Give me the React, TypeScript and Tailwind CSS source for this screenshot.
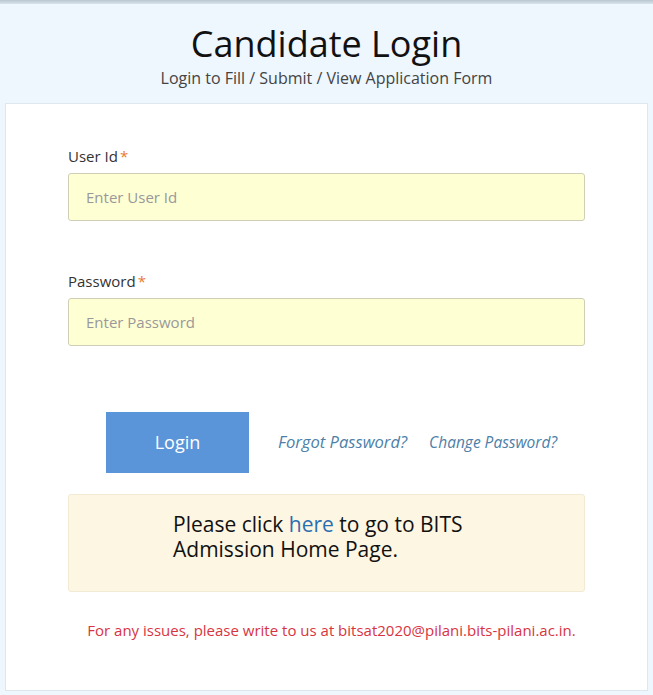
import React from "react";

export default function App() {
  const font = { fontFamily: '"Open Sans", "Noto Sans", sans-serif' };
  return (
    <div className="min-h-[695px] w-full bg-[#eef6fe]" style={font}>
      <div className="h-[4px] bg-gradient-to-b from-[#b9c7d1] to-[#d9e4ec]" />
      <div className="flex flex-col items-center pt-[18px] pb-[14px]">
        <h1 className="text-[36px] leading-[44px] text-[#111] font-normal">Candidate Login</h1>
        <p className="text-[16px] leading-[22px] text-[#444] mt-[1px]">Login to Fill / Submit / View Application Form</p>
      </div>
      <div className="mx-[5px] bg-white border border-[#dde7f0] px-[62px] pt-[41px] pb-[44px] h-[588px]">
        <label className="block text-[15px] leading-[22px] text-[#333]">
          User Id<span className="text-[#e9793a] ml-[2px]">*</span>
        </label>
        <div className="mt-[6px] h-[48px] rounded-[3px] border border-[#cfcfb8] bg-[#ffffd4] flex items-center px-[17px]">
          <span className="text-[15px] text-[#999]">Enter User Id</span>
        </div>
        <label className="block text-[15px] leading-[22px] text-[#333] mt-[49px]">
          Password<span className="text-[#e9793a] ml-[2px]">*</span>
        </label>
        <div className="mt-[6px] h-[48px] rounded-[3px] border border-[#cfcfb8] bg-[#ffffd4] flex items-center px-[17px]">
          <span className="text-[15px] text-[#999]">Enter Password</span>
        </div>
        <div className="flex items-center mt-[66px] pl-[38px]">
          <button className="w-[143px] h-[61px] bg-[#5a95d9] text-white text-[18px]">Login</button>
          <a className="ml-[29px] italic text-[16.6px] text-[#4d7fa8]">Forgot Password?</a>
          <a className="ml-[22px] italic text-[15.5px] text-[#4d7fa8]">Change Password?</a>
        </div>
        <div className="mt-[21px] h-[98px] rounded-[3px] border border-[#f2ead2] bg-[#fdf6e3] pl-[104px] pt-[17px]">
          <p className="text-[21px] leading-[25px] text-[#111] max-w-[310px]">
            Please click <a className="text-[#2a6fb0]">here</a> to go to BITS Admission Home Page.
          </p>
        </div>
        <p className="mt-[27px] pl-[10px] text-center text-[15px] text-[#d8343f]">
          For any issues, please write to us at bitsat2020@pilani.bits-pilani.ac.in.
        </p>
      </div>
    </div>
  );
}
